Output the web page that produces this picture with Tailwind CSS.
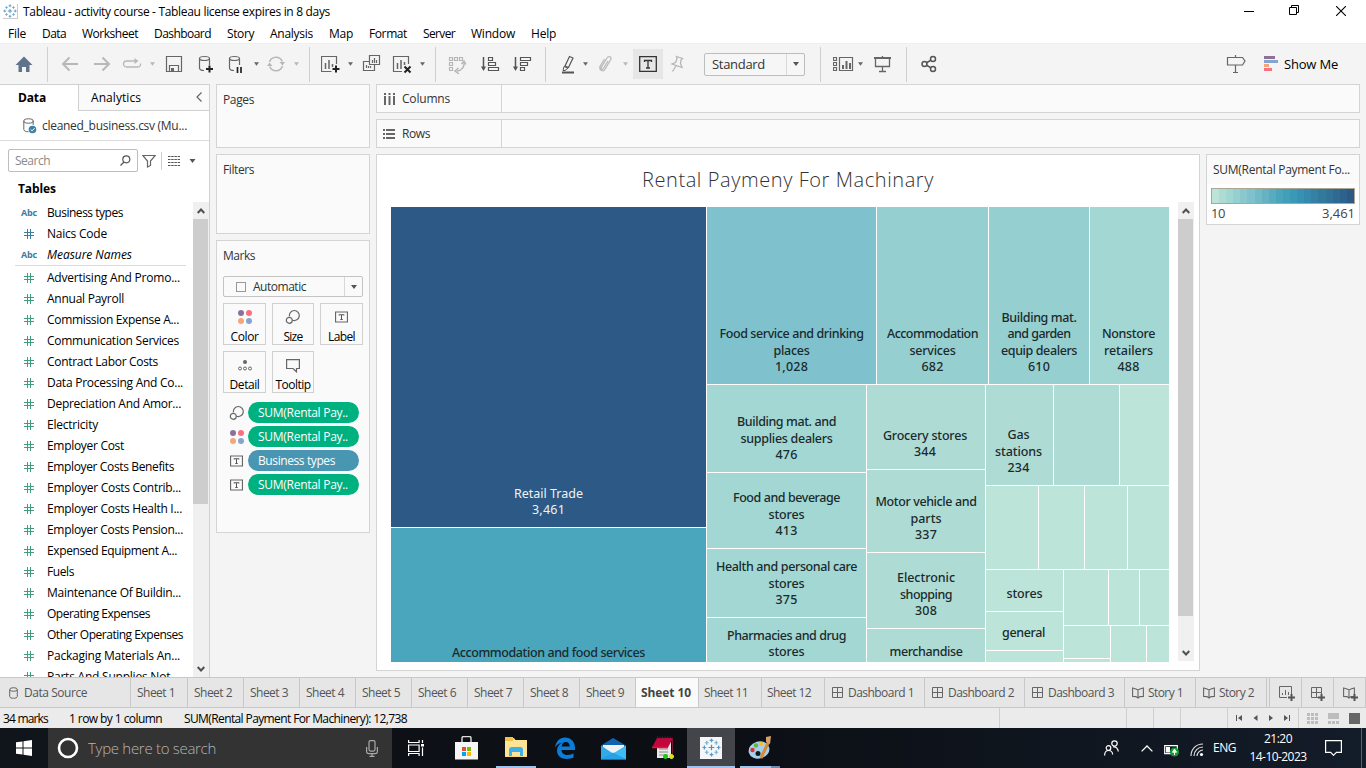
<!DOCTYPE html>
<html lang="en">
<head>
<meta charset="utf-8">
<title>Tableau - activity course</title>
<script src="https://cdn.jsdelivr.net/npm/@tailwindcss/browser@4"></script>
</head>
<body class="w-[1366px] h-[768px] overflow-hidden bg-[#f4f4f4] font-['Open_Sans','Noto_Sans',sans-serif] text-[12px] leading-4 text-black flex flex-col whitespace-nowrap">
<svg class="hidden">
  <defs>
    <symbol id="caret" viewBox="0 0 6 4"><path d="M0 0h6L3 4z" fill="currentColor"/></symbol>
    <symbol id="hash" viewBox="0 0 10 10"><path d="M3.500 0v10M6.500 0v10M0 3.500h10M0 6.500h10" stroke="currentColor" stroke-width="1" fill="none"/></symbol>
    <symbol id="up" viewBox="0 0 8 6"><path d="M.7 5L4 1.500 7.300 5" stroke="#505050" stroke-width="2" fill="none"/></symbol>
    <symbol id="down" viewBox="0 0 8 6"><path d="M.7 1L4 4.500 7.300 1" stroke="#505050" stroke-width="2" fill="none"/></symbol>
    <symbol id="size" viewBox="0 0 16 16"><path d="M4.400 7.400A5 5 0 1 1 7.600 11.200" fill="none" stroke="#666" stroke-width="1.200"/><circle cx="4.300" cy="11.300" r="3" fill="none" stroke="#666" stroke-width="1.200"/></symbol>
    <symbol id="dots" viewBox="0 0 16 16"><circle cx="4" cy="4" r="3" fill="#8b719b"/><circle cx="12" cy="4" r="3" fill="#f9717f"/><circle cx="4" cy="12" r="3" fill="#f5a679"/><circle cx="12" cy="12" r="3" fill="#83a5cf"/></symbol>
    <symbol id="tbox" viewBox="0 0 14 12"><path d="M.6.6h12.800v10.800H.6z" fill="none" stroke="#666" stroke-width="1.200"/><path d="M4.500 4.500V3.500h5v1M7 3.500v5M5.700 8.600h2.600" fill="none" stroke="#555" stroke-width="1.100"/></symbol>
    <symbol id="dash" viewBox="0 0 11 11"><path d="M.5.5h10v10h-10zM5.500.5v10M.5 5.500h10" fill="none" stroke="#666"/></symbol>
    <symbol id="story" viewBox="0 0 12 12"><path d="M.6 1l3.400 1 2 1 2-1 3.400-1v8.500L8 9.600l-2 1.400-2-1.400-3.400-.1zM6 3v8" fill="none" stroke="#666" stroke-width="1.100"/></symbol>
    <symbol id="plus" viewBox="0 0 7 7"><path d="M3.500 0v7M0 3.500h7" stroke="#555" stroke-width="2"/></symbol>
    <symbol id="tableau" viewBox="0 0 20 20"><g stroke="#4e8fb8" stroke-width="1.300"><path d="M10 7v6M7 10h6"/><path d="M10 .5v4M8 2.500h4M10 15.500v4M8 17.500h4M.5 10h4M2.500 8v4M15.500 10h4M17.500 8v4" stroke="#5b9bc4"/><path d="M5 3v4M3 5h4M15 3v4M13 5h4M5 13v4M3 15h4M15 13v4M13 15h4" stroke="#7ab0d0"/></g></symbol>
  </defs>
</svg>

<!-- Title bar -->
<header class="h-[22px] shrink-0 bg-white flex items-center pt-px">
  <span class="ml-[3px] mr-[5px] size-[15px] border-r border-b border-[#ccc] flex items-center justify-center"><svg class="size-[14px]"><use href="#tableau"/></svg></span>
  <span data-w="307">Tableau - activity course - Tableau license expires in 8 days</span>
  <svg class="ml-auto mr-[35px] w-[10px] h-[10px]" fill="none" stroke="#000"><path d="M0 4.500h10"/></svg>
  <svg class="mr-[36px] w-[11px] h-[11px] -mt-0.5" fill="none" stroke="#000" viewBox="0 0 11 11"><path d="M.5 2.500h7v7h-7zM2.500 2.500v-2h7v7h-2"/></svg>
  <svg class="mr-[20px] w-[10px] h-[10px] -mt-0.5" fill="none" stroke="#000" stroke-width="1.100"><path d="M0 0l10 10M10 0L0 10"/></svg>
</header>
<nav class="h-[21px] shrink-0 bg-white flex items-center gap-4 pl-2 pt-0.5">
  <span data-w="18">File</span><span data-w="24">Data</span><span data-w="56">Worksheet</span><span data-w="57">Dashboard</span><span data-w="27">Story</span><span data-w="43">Analysis</span><span data-w="24">Map</span><span data-w="38">Format</span><span data-w="32">Server</span><span data-w="44">Window</span><span data-w="25">Help</span>
</nav>

<!-- Toolbar -->
<div class="h-[41px] shrink-0 flex items-center border-t border-[#efefef] text-[#666]">
  <svg class="ml-[14px] size-5"><path d="M10 2.500L18.500 11h-3v7H12v-5H8v5H4.500v-7h-3z" fill="#60738a"/></svg>
  <i class="ml-[13px] w-px h-[35px] bg-[#d0d0d0]"></i>
  <svg class="ml-3 size-5" fill="none" stroke="#b8b8b8" stroke-width="2"><path d="M18 10H3M9.500 3.500L3 10l6.500 6.500"/></svg>
  <svg class="ml-3 size-5" fill="none" stroke="#b8b8b8" stroke-width="2"><path d="M2 10h15M10.500 3.500L17 10l-6.500 6.500"/></svg>
  <svg class="ml-2.5 size-5" fill="none" stroke="#b8b8b8" stroke-width="1.300"><path d="M13 7H4.500a2.800 2.800 0 0 0 0 6H16a2.600 2.600 0 0 0 2.400-3.500"/><path d="M12.500 4v6l4-3z" fill="#b8b8b8" stroke="none"/></svg>
  <svg class="ml-2 w-[5px] h-1 mr-px text-[#b8b8b8]"><use href="#caret"/></svg>
  <svg class="ml-2 size-5" fill="none" stroke="#666" stroke-width="1.200"><path d="M2.500 2.500h15v15h-15zM5.500 17.500v-6h9v6"/><path d="M7 14h3v3H7z" fill="#666" stroke="none"/></svg>
  <svg class="ml-3 size-5" fill="none" stroke="#666" stroke-width="1.200"><ellipse cx="8.500" cy="4.500" rx="5" ry="2"/><path d="M3.500 4.500V14c0 1.500 2 2.500 4.500 2.500M13.500 4.500V11"/><path d="M13.500 11.500v7M10 15h7" stroke="#222" stroke-width="2"/></svg>
  <svg class="ml-2.5 size-5" fill="none" stroke="#666" stroke-width="1.200"><ellipse cx="8.500" cy="4.500" rx="5" ry="2"/><path d="M3.500 4.500V14c0 1.500 2 2.500 4.500 2.500M13.500 4.500V11"/><path d="M11.500 13v6M15 13v6" stroke="#222" stroke-width="1.700"/></svg>
  <svg class="ml-2 w-[5px] h-1 mr-px"><use href="#caret"/></svg>
  <svg class="ml-1.5 size-5" fill="none" stroke="#b8b8b8" stroke-width="1.500"><path d="M3.500 8a6.800 6.800 0 0 1 12.800-.5M16.500 12a6.800 6.800 0 0 1-12.800.5"/><path d="M13.500 8h5.500l-2.500 3.500zM6.500 12H1l2.500-3.500z" fill="#b8b8b8" stroke="none"/></svg>
  <svg class="ml-2 w-[5px] h-1 mr-px text-[#b8b8b8]"><use href="#caret"/></svg>
  <i class="ml-[9px] w-px h-[35px] bg-[#d0d0d0]"></i>
  <svg class="ml-[11px] size-5" fill="none" stroke="#666" stroke-width="1.200"><path d="M15.500 10V2.500H.5v15h10"/><path d="M4.500 9v6M8 6v9M11.500 10v3" stroke-width="1.500"/><path d="M15 11.500v7M11.500 15h7" stroke="#222" stroke-width="2"/></svg>
  <svg class="ml-[7px] w-[5px] h-1 mr-px"><use href="#caret"/></svg>
  <svg class="ml-2 size-5" fill="none" stroke="#666" stroke-width="1.200"><path d="M7.500 1.500h10v9h-10zM7.500 7.500h-6v9h11v-6"/><path d="M10.500 6v3M12.500 4v5M14.500 6v3M4.500 11v3M6.500 12v2M8.500 12v2"/></svg>
  <svg class="ml-2.5 size-5" fill="none" stroke="#666" stroke-width="1.200"><path d="M16.500 10V2.500h-15v15H10"/><path d="M5.500 9v6M9 6v9M12.500 8v3" stroke-width="1.500"/><path d="M12.500 12.500l6 6M18.500 12.500l-6 6" stroke="#222" stroke-width="2"/></svg>
  <svg class="ml-2 w-[5px] h-1 mr-px"><use href="#caret"/></svg>
  <i class="ml-[9px] w-px h-[35px] bg-[#d0d0d0]"></i>
  <svg class="ml-[11px] size-5" fill="none" stroke="#b5b5b5" stroke-width="1.200"><path d="M2.500 3.500h3v3h-3zM7.500 3.500h3v3h-3zM12.500 3.500h3v3h-3zM2.500 8.500h3v3h-3zM2.500 13.500h3v3h-3z"/><path d="M17 8c1 5-3 9-7 9" stroke-width="1.400"/><path d="M14.500 10L17 7l2 3.500M11.500 14L8 17l4 3" stroke-width="1.400"/></svg>
  <svg class="ml-[13px] size-5" fill="none" stroke="#555" stroke-width="1.200"><path d="M3.500 3v12" stroke-width="1.500"/><path d="M1 12.500h5L3.500 17z" fill="#555" stroke="none"/><path d="M8.500 3.500h4v3h-4zM8.500 8.500h7v3h-7zM8.500 13.500h10v3h-10z"/></svg>
  <svg class="ml-3 size-5" fill="none" stroke="#555" stroke-width="1.200"><path d="M3.500 3v12" stroke-width="1.500"/><path d="M1 12.500h5L3.500 17z" fill="#555" stroke="none"/><path d="M8.500 3.500h10v3h-10zM8.500 8.500h7v3h-7zM8.500 13.500h4v3h-4z"/></svg>
  <i class="ml-[13px] w-px h-[35px] bg-[#d0d0d0]"></i>
  <svg class="ml-3 size-5" fill="none" stroke="#555" stroke-width="1.200"><path d="M11.500 2.500l3.500 1.500-4.500 9.500-3.500-1.500z"/><path d="M5 16.500l1-4 4 1.700-3 2.300z" stroke-width="1"/><path d="M4 18.500h12" stroke-width="2"/></svg>
  <svg class="ml-[5px] w-[5px] h-1 mr-px"><use href="#caret"/></svg>
  <svg class="ml-1.5 size-5" fill="none" stroke="#bbb" stroke-width="1.300"><path d="M13 7l-4.500 7.500c-1 1.500-3 .3-2.200-1.200L12 4c1.500-2.500 5-1 3.800 1.500l-6 10c-1.500 2.500-6 1-4.800-3L9.500 5"/></svg>
  <svg class="ml-2 w-[5px] h-1 mr-px text-[#b8b8b8]"><use href="#caret"/></svg>
  <span class="ml-1 size-[30px] bg-[#e6e6e6] flex items-center justify-center"><svg class="w-[18px] h-[16px]" fill="none" stroke="#333" stroke-width="1.300"><path d="M.7.7h16.600v14.600H.7zM5.500 6V4.500h7V6M9 4.500v7M7 12h4"/></svg></span>
  <svg class="ml-1 size-5" fill="none" stroke="#b5b5b5" stroke-width="1.300"><path d="M9.500 2.500l6 2-1.500 1.500-.5 3.500 1.500 4-10-3.500L8.500 8.500l1.500-3.500zM9 12l-3.500 5.500"/></svg>
  <div class="ml-[17px] w-[101px] h-[23px] border border-[#bdbdbd] rounded-[2px] bg-[#f6f6f6] flex items-center text-[#333] text-[13px]">
    <span class="ml-[7px] w-[74px]"><span data-w="53">Standard</span></span>
    <span class="w-px h-full bg-[#d8d8d8]"></span>
    <svg class="ml-[6px] w-[6px] h-1 text-[#555]"><use href="#caret"/></svg>
  </div>
  <i class="ml-[15px] w-px h-[35px] bg-[#d0d0d0]"></i>
  <svg class="ml-3 w-[21px] h-5" fill="none" stroke="#666" stroke-width="1.200"><path d="M.5 3.500h3v3h-3zM.5 8.500h3v3h-3zM.5 13.500h3v3h-3zM6.500 3.500h13v13h-13z"/><path d="M10 11v4M13.500 7v8M17 9v6" stroke-width="2"/></svg>
  <svg class="ml-1 w-[5px] h-1 mr-px"><use href="#caret"/></svg>
  <svg class="ml-2 size-5" fill="none" stroke="#666" stroke-width="1.300"><path d="M2 4h17" stroke-width="2"/><path d="M3.500 4v8.500h14V4M10.500 12.500V17M7 17.500h7M10.500 2v2"/></svg>
  <i class="ml-[14px] w-px h-[35px] bg-[#d0d0d0]"></i>
  <svg class="ml-3 size-5" fill="none" stroke="#555" stroke-width="1.500"><circle cx="5.500" cy="10" r="2.500"/><circle cx="14" cy="5" r="2.500"/><circle cx="14" cy="15" r="2.500"/><path d="M8 8.500l4-2.300M8 11.500l4 2.300"/></svg>
  <svg class="ml-auto w-5 h-5" fill="none" stroke="#666" stroke-width="1.200"><path d="M1.500 3.500h15l2.500 3.500-2.500 4h-15zM9.500 1v2.500M9.500 11v7.500M7 18.500h5"/></svg>
  <svg class="ml-[18px] w-[14px] h-5"><path d="M0 2h11v3H0z" fill="#8b719b"/><path d="M0 6h14v3H0z" fill="#83a5cf"/><path d="M0 10h5v3H0z" fill="#f5a679"/><path d="M0 14h8v3H0z" fill="#f9717f"/></svg>
  <span class="ml-[6px] mr-[28px] w-[54px] text-[13px] text-black"><span data-w="54">Show Me</span></span>
</div>

<!-- Workspace -->
<main class="h-[593px] shrink-0 flex gap-[7px]">
  <!-- Data pane -->
  <aside class="w-[210px] h-full bg-white border-r border-t border-[#d0d0d0] flex flex-col overflow-hidden">
    <div class="h-[26px] shrink-0 flex">
      <span class="w-[78px] pl-[18px] pt-[5px] font-bold"><span data-w="28">Data</span></span>
      <div class="flex-1 border-l border-b border-[#d0d0d0] bg-[#fafafa] flex pl-3 pt-[5px] pr-[7px]">
        <span data-w="50">Analytics</span>
        <svg class="ml-auto mt-[2px] w-[6px] h-[10px]" fill="none" stroke="#666" stroke-width="1.200"><path d="M5.500.5L1 5l4.500 4.500"/></svg>
      </div>
    </div>
    <div class="h-[30px] shrink-0 border-b border-[#dcdcdc] flex items-center pl-[23px] text-[#333]">
      <svg class="w-[14px] h-4 mr-[5px]" fill="none" stroke="#666"><ellipse cx="5.500" cy="3" rx="4.700" ry="2.200"/><path d="M.8 3v8.500c0 1.300 2 2.300 4.700 2.300M10.200 3v4"/><circle cx="9.500" cy="11.500" r="3.800" fill="#3a83a5" stroke="none"/><path d="M7.700 11.500l1.400 1.400 2.500-2.700" stroke="#fff"/></svg>
      <span data-w="145">cleaned_business.csv (Mu...</span>
    </div>
    <div class="mt-2 h-[23px] shrink-0 flex items-center">
      <div class="ml-2 w-[130px] h-[23px] border border-[#bdbdbd] rounded-[2px] flex items-center justify-between px-1.5 text-[#8a8a8a]">
        <span data-w="35">Search</span>
        <svg class="size-[11px]" fill="none" stroke="#555" stroke-width="1.200"><circle cx="6.300" cy="4.300" r="3.500"/><path d="M4 7L.5 10.500"/></svg>
      </div>
      <svg class="ml-1 w-[14px] h-[14px]" fill="none" stroke="#666" stroke-width="1.200"><path d="M.8 1.500h12.400L8.500 7v4.500L5.500 13V7z"/></svg>
      <i class="ml-[5px] w-px h-[18px] bg-[#d0d0d0]"></i>
      <svg class="ml-1.5 w-[12px] h-[10px]" stroke="#555" stroke-dasharray="2.500 .700"><path d="M0 .5h12M0 3.500h12M0 6.500h12M0 9.500h12"/></svg>
      <svg class="ml-[9px] w-[7px] h-1 text-[#555]"><use href="#caret"/></svg>
    </div>
    <div class="h-[30px] shrink-0 pl-[18px] pt-[9px] font-bold"><span data-w="38">Tables</span></div>
    <div class="flex-1 min-h-0 flex">
      <div id="fields" class="w-[193px] overflow-hidden"></div>
      <div class="w-4 bg-[#f0f0f0] flex flex-col justify-between">
        <div class="h-[17px] flex items-center justify-center"><svg class="w-2 h-[6px]"><use href="#up"/></svg></div>
        <div class="w-[15px] h-[285px] bg-[#cdcdcd]"></div>
        <div class="flex-1"></div>
        <div class="h-[17px] flex items-center justify-center"><svg class="w-2 h-[6px]"><use href="#down"/></svg></div>
      </div>
    </div>
  </aside>

  <!-- Cards -->
  <section class="w-[154px] -ml-px flex flex-col gap-[6px] text-[#333]">
    <div class="h-[64px] shrink-0 border border-[#d4d4d4] bg-[#fafafa] pl-1.5 pt-[7px]"><span data-w="31">Pages</span></div>
    <div class="h-[80px] shrink-0 border border-[#d4d4d4] bg-[#fafafa] pl-1.5 pt-[7px]"><span data-w="31">Filters</span></div>
    <div class="h-[293px] shrink-0 border border-[#d4d4d4] bg-[#fafafa] px-1.5 pt-[7px] flex flex-col">
      <div class="h-4"><span data-w="32">Marks</span></div>
      <div class="mt-3 w-[140px] h-[21px] shrink-0 border border-[#c4c4c4] rounded-[2px] flex items-center">
        <i class="ml-3 size-[10px] border border-[#999]"></i>
        <span class="ml-[7px] w-[91px]"><span data-w="53">Automatic</span></span>
        <span class="w-px h-full bg-[#d8d8d8]"></span>
        <svg class="ml-1.5 w-[6px] h-1 text-[#555]"><use href="#caret"/></svg>
      </div>
      <div class="mt-[6px] grid grid-cols-[43px_42px_43px] gap-x-[6px] gap-y-[6px] auto-rows-[42px] text-black text-center leading-[14px]">
        <div class="border border-[#d0d0d0] flex flex-col items-center justify-between pt-[5px]"><svg class="size-4 shrink-0"><use href="#dots"/></svg><span data-w="28">Color</span></div>
        <div class="border border-[#d0d0d0] flex flex-col items-center justify-between pt-[5px]"><svg class="size-4 shrink-0"><use href="#size"/></svg><span data-w="19">Size</span></div>
        <div class="border border-[#d0d0d0] flex flex-col items-center justify-between pt-[7px]"><svg class="w-[13px] h-3 shrink-0"><use href="#tbox"/></svg><span data-w="27">Label</span></div>
        <div class="border border-[#d0d0d0] flex flex-col items-center justify-between pt-[7px]"><svg class="w-[14px] h-[14px] shrink-0" fill="none" stroke="#666"><circle cx="7" cy="3" r="2" fill="#666" stroke="none"/><circle cx="2" cy="9.500" r="1.500"/><circle cx="7" cy="9.500" r="1.500"/><circle cx="12" cy="9.500" r="1.500"/></svg><span data-w="30">Detail</span></div>
        <div class="border border-[#d0d0d0] flex flex-col items-center justify-between pt-[7px]"><svg class="w-[14px] h-[14px] shrink-0" fill="none" stroke="#666" stroke-width="1.200"><path d="M.6.6h12.800v8.900H10.500v3.300L7 9.500H.6z"/></svg><span data-w="35">Tooltip</span></div>
      </div>
      <div class="mt-[9px] flex flex-col gap-[3px] pl-1.5 text-white">
        <div class="flex items-center gap-[3px]"><svg class="size-4"><use href="#size"/></svg><span class="w-[111px] h-[21px] rounded-full bg-[#00b180] pl-2.5 pt-[2.500px]"><span data-w="90">SUM(Rental Pay..</span></span></div>
        <div class="flex items-center gap-[3px]"><svg class="size-4"><use href="#dots"/></svg><span class="w-[111px] h-[21px] rounded-full bg-[#00b180] pl-2.5 pt-[2.500px]"><span data-w="90">SUM(Rental Pay..</span></span></div>
        <div class="flex items-center gap-[5px] pl-px"><svg class="w-[13px] h-3"><use href="#tbox"/></svg><span class="w-[111px] h-[21px] rounded-full bg-[#4996b2] pl-2.5 pt-[2.500px]"><span data-w="77">Business types</span></span></div>
        <div class="flex items-center gap-[5px] pl-px"><svg class="w-[13px] h-3"><use href="#tbox"/></svg><span class="w-[111px] h-[21px] rounded-full bg-[#00b180] pl-2.5 pt-[2.500px]"><span data-w="90">SUM(Rental Pay..</span></span></div>
      </div>
    </div>
  </section>

  <!-- Shelves and view -->
  <section class="w-[984px] -ml-px flex flex-col text-[#333]">
    <div class="h-[29px] shrink-0 border border-[#d4d4d4] bg-[#fafafa] flex items-center">
      <div class="w-[125px] h-full border-r border-[#d4d4d4] flex items-center pl-[7px]">
        <svg class="w-3 h-3 mr-1.5" stroke="#666" stroke-width="2"><path d="M1 3v9M5.500 3v9M10 3v9"/><path d="M1 0v2M5.500 0v2M10 0v2"/></svg><span data-w="48">Columns</span>
      </div>
    </div>
    <div class="mt-1.5 h-[29px] shrink-0 border border-[#d4d4d4] bg-[#fafafa] flex items-center">
      <div class="w-[125px] h-full border-r border-[#d4d4d4] flex items-center pl-[6px]">
        <svg class="w-3 h-3 mr-[7px]" stroke="#666" stroke-width="2"><path d="M3 2h9M3 6h9M3 10h9"/><path d="M0 2h2M0 6h2M0 10h2"/></svg><span data-w="28">Rows</span>
      </div>
    </div>
    <div class="mt-1.5 flex gap-1.5">
      <div class="w-[824px] h-[517px] border border-[#d4d4d4] bg-white flex flex-col">
        <h1 class="h-[48px] shrink-0 pt-[13px] text-center text-[20px] leading-6 font-light text-[#333]"><span data-w="292">Rental Paymeny For Machinary</span></h1>
        <div class="flex pl-[14px]">
          <!-- Treemap -->
          <div class="mt-1 w-[778px] h-[455px] shrink-0 overflow-hidden grid grid-cols-[315px_462px] gap-px text-center font-['Noto_Sans','Open_Sans',sans-serif] font-medium text-[12.500px] leading-[16.250px] text-[#1b2a2c] whitespace-pre">
            <div class="grid grid-rows-[320px_134px] gap-px">
              <div class="bg-[#2c5985] text-[#eef2f5] font-normal flex flex-col justify-end items-center pb-[9px]"><span data-w="69">Retail Trade</span><span data-w="33">3,461</span></div>
              <div class="bg-[#4aa6bd] flex flex-col justify-end items-center pb-px"><span data-w="193">Accommodation and food services</span></div>
            </div>
            <div class="grid grid-rows-[177px_277px] gap-px">
              <div class="grid grid-cols-[169px_111px_100px_79px] gap-px">
                <div class="bg-[#7fc1cc] flex flex-col justify-end items-center pb-[9px]"><span data-w="144">Food service and drinking</span><span data-w="36">places</span><span data-w="33">1,028</span></div>
                <div class="bg-[#96cfd0] flex flex-col justify-end items-center pb-[9px]"><span data-w="91">Accommodation</span><span data-w="46">services</span><span data-w="22">682</span></div>
                <div class="bg-[#96cfd0] flex flex-col justify-end items-center pb-[9px]"><span data-w="75">Building mat.</span><span data-w="63">and garden</span><span data-w="76">equip dealers</span><span data-w="22">610</span></div>
                <div class="bg-[#a2d7d3] flex flex-col justify-end items-center pb-[9px] pr-[2px]"><span data-w="53">Nonstore</span><span data-w="49">retailers</span><span data-w="22">488</span></div>
              </div>
              <div class="grid grid-cols-[159px_118px_183px] gap-px">
                <div class="grid grid-rows-[87px_75px_68px_44px] gap-px">
                  <div class="bg-[#a2d7d3] flex flex-col justify-end items-center pb-[9px]"><span data-w="99">Building mat. and</span><span data-w="92">supplies dealers</span><span data-w="22">476</span></div>
                  <div class="bg-[#a2d7d3] flex flex-col justify-end items-center pb-[9px]"><span data-w="107">Food and beverage</span><span data-w="36">stores</span><span data-w="22">413</span></div>
                  <div class="bg-[#a2d7d3] flex flex-col justify-end items-center pb-[9px]"><span data-w="141">Health and personal care</span><span data-w="36">stores</span><span data-w="22">375</span></div>
                  <div class="bg-[#a2d7d3] flex flex-col justify-end items-center pb-[2px]"><span data-w="119">Pharmacies and drug</span><span data-w="36">stores</span></div>
                </div>
                <div class="grid grid-rows-[84px_82px_75px_33px] gap-px">
                  <div class="bg-[#aedcd5] flex flex-col justify-end items-center pb-[9px] pr-[2px]"><span data-w="84">Grocery stores</span><span data-w="22">344</span></div>
                  <div class="bg-[#aedcd5] flex flex-col justify-end items-center pb-[9px]"><span data-w="101">Motor vehicle and</span><span data-w="31">parts</span><span data-w="22">337</span></div>
                  <div class="bg-[#aedcd5] flex flex-col justify-end items-center pb-[9px]"><span data-w="58">Electronic</span><span data-w="52">shopping</span><span data-w="22">308</span></div>
                  <div class="bg-[#aedcd5] flex flex-col justify-end items-center pb-[2px]"><span data-w="73">merchandise</span></div>
                </div>
                <div class="grid grid-rows-[100px_83px_92px] gap-px">
                  <div class="grid grid-cols-[67px_65px_49px] gap-px">
                    <div class="bg-[#aedcd5] flex flex-col justify-end items-center pb-[9px] pr-[2px]"><span data-w="22">Gas</span><span data-w="47">stations</span><span data-w="22">234</span></div>
                    <div class="bg-[#aedcd5]"></div>
                    <div class="bg-[#bce4d8]"></div>
                  </div>
                  <div class="grid grid-cols-[52px_45px_42px_41px] gap-px"><div class="bg-[#bce4d8]"></div><div class="bg-[#bce4d8]"></div><div class="bg-[#bce4d8]"></div><div class="bg-[#bce4d8]"></div></div>
                  <div class="grid grid-cols-[77px_105px] gap-px">
                    <div class="grid grid-rows-[41px_38px_11px] gap-px">
                      <div class="bg-[#bce4d8] flex flex-col justify-end items-center pb-[9px]"><span data-w="36">stores</span></div>
                      <div class="bg-[#bce4d8] flex flex-col justify-end items-center pb-[9px] pr-[2px]"><span data-w="43">general</span></div>
                      <div class="bg-[#bce4d8]"></div>
                    </div>
                    <div class="grid grid-rows-[55px_36px] gap-px">
                      <div class="grid grid-cols-[44px_30px_29px] gap-px"><div class="bg-[#bce4d8]"></div><div class="bg-[#bce4d8]"></div><div class="bg-[#bce4d8]"></div></div>
                      <div class="grid grid-cols-[46px_35px_22px] gap-px">
                        <div class="grid grid-rows-[32px_3px] gap-px"><div class="bg-[#bce4d8]"></div><div class="bg-[#bce4d8]"></div></div>
                        <div class="bg-[#bce4d8]"></div><div class="bg-[#bce4d8]"></div>
                      </div>
                    </div>
                  </div>
                </div>
              </div>
            </div>
          </div>
          <div class="ml-[9px] -mt-px w-4 h-[459px] bg-[#f0f0f0] flex flex-col">
            <div class="h-[17px] flex items-center justify-center"><svg class="w-2 h-[6px]"><use href="#up"/></svg></div>
            <div class="w-[15px] h-[397px] bg-[#cdcdcd]"></div>
            <div class="flex-1"></div>
            <div class="h-[17px] flex items-center justify-center"><svg class="w-2 h-[6px]"><use href="#down"/></svg></div>
          </div>
        </div>
      </div>
      <!-- Colour legend -->
      <div class="w-[154px] h-[71px] border border-[#d4d4d4] bg-white flex flex-col">
        <div class="h-[29px] bg-[#fafafa] pl-1.5 pt-[7px]"><span data-w="137">SUM(Rental Payment Fo...</span></div>
        <div id="ramp" class="mt-1 mx-1 h-4 border border-[#a9a794] flex"></div>
        <div class="mx-1 flex justify-between text-[13px] leading-[18px] text-[#444]"><span data-w="14">10</span><span data-w="33">3,461</span></div>
      </div>
    </div>
  </section>
</main>

<!-- Sheet tabs -->
<div id="tabs" class="h-[31px] shrink-0 border-y border-[#c8c8c8] bg-[#e6e6e6] flex text-[#555]"></div>

<!-- Status bar -->
<div class="h-5 shrink-0 bg-[#ebebeb] flex pl-[3px]">
  <span class="w-[66px] pt-[3px]"><span data-w="45">34 marks</span></span>
  <span class="w-[115px] pt-[3px]"><span data-w="93">1 row by 1 column</span></span>
  <span class="pt-[3px]"><span data-w="223">SUM(Rental Payment For Machinery): 12,738</span></span>
  <i class="ml-auto w-[127px] border-l border-[#cfcfcf]"></i><i class="w-[27px] border-l border-[#cfcfcf]"></i><i class="w-[27px] border-l border-[#cfcfcf]"></i><i class="w-[47px] border-l border-[#cfcfcf]"></i>
  <div class="w-[71px] border-l border-[#cfcfcf] flex items-center pl-2">
    <svg class="w-[56px] h-2" fill="#555"><path d="M0 1h1v6H0zM6 1v6L2 4zM21.500 1v6l-4-3zM33 1v6l4-3zM48 1v6l4-3zM53 1h1v6h-1z"/></svg>
  </div>
  <div class="w-[68px] border-l border-[#cfcfcf] flex items-center pl-2">
    <svg class="w-[54px] h-[11px]"><path d="M0 0h3v3H0zM4 0h3v3H4zM8 0h3v3H8zM0 4h3v3H0zM4 4h3v3H4zM8 4h3v3H8zM0 8h3v3H0zM4 8h3v3H4zM8 8h3v3H8zM21 0h11v6H21zM21 8h3v3h-3zM25 8h3v3h-3zM29 8h3v3h-3z" fill="#bdbdbd"/><path d="M42 0h11v11H42z" fill="#666"/></svg>
  </div>
</div>

<!-- Taskbar -->
<footer class="h-10 shrink-0 bg-[#0e131b] bg-linear-to-r from-[#10151c] via-[#0b0e13] to-[#131c29] flex items-center text-white">
  <svg class="ml-4 size-4" fill="#fff"><path d="M0 2.300L6.500 1.400v6.100H0zM7.500 1.200L16 0v7.500H7.500zM0 8.500h6.500v6.100L0 13.700zM7.500 8.500H16V16l-8.500-1.200z"/></svg>
  <div class="ml-4 w-[344px] h-10 bg-[#333] flex items-center">
    <svg class="ml-[9px] size-[22px]"><circle cx="11" cy="11" r="9" fill="none" stroke="#fff" stroke-width="2.600"/></svg>
    <span class="ml-[9px] text-[15px] leading-5 font-light text-[#b5b5b5]"><span data-w="128">Type here to search</span></span>
    <svg class="ml-auto mr-[14px] w-3 h-[17px]" fill="none" stroke="#aaa" stroke-width="1.200"><rect x="3" y=".6" width="6" height="10.500" rx="1.500"/><path d="M.6 7v4.500c0 1.500 1 2.200 2.500 2.200h5.800c1.500 0 2.500-.7 2.500-2.200V7M6 13.700v2.700M3.500 16.400h5"/></svg>
  </div>
  <svg class="ml-4 w-[17px] h-4" fill="none" stroke="#fff" stroke-width="1.200"><path d="M.6 0v2.500h10.500V0M.6 5h10.500v6.500H.6zM.6 16v-2.500h10.500V16M14.500 0v3M14.500 7.500V16"/><path d="M13 4h3v2.500h-3z" fill="#fff" stroke="none"/></svg>
  <svg class="ml-[30px] w-6 h-6"><path d="M7 7V2c0-1 .5-1.500 1.500-1.500h6c1 0 1.500.5 1.500 1.500v5" fill="none" stroke="#ddd" stroke-width="1.400"/><path d="M0 6h23v17.500H0z" fill="#f5f5f5"/><path d="M7 11h4v4H7z" fill="#e8502a"/><path d="M12 11h4v4h-4z" fill="#7fba00"/><path d="M7 16h4v4H7z" fill="#00a4ef"/><path d="M12 16h4v4h-4z" fill="#ffb900"/></svg>
  <div class="ml-[17px] w-10 h-10 border-b-2 border-[#9fc3ea] flex items-center justify-center"><svg class="w-6 h-6"><path d="M1 3h9l1.500 2H23v17H1z" fill="#f9d978"/><path d="M1 5h22v16H1z" fill="#fde595"/><path d="M1 2h8v4H1z" fill="#f3c244"/><path d="M5 21v-6c0-2 1-3 3-3h8c2 0 3 1 3 3v6h-3v-4H8v4z" fill="#3fb1e8"/></svg></div>
  <svg class="ml-[18px] w-[22px] h-[22px]" viewBox="0 0 22 22"><path d="M1 10.500C2 4 6 .5 11 .5c6 0 10 4.500 10 10.500v2H7.500c0 3.500 2.800 5 6 5 2.500 0 4.500-.7 6-1.700v4.300c-2 1-4 1.400-6.700 1.400C7 22 3 18.500 3 13.500c0-3.500 2-6.300 5-7.800C5 6 2.500 8 1 10.500zM7.600 9.500h8.200c0-2.500-1.300-4.500-4-4.500-2.300 0-3.900 2-4.200 4.500z" fill="#0a7ddb"/></svg>
  <svg class="ml-[25px] w-[25px] h-[23px]"><path d="M0 8.500L12 1l13 7.500V22.500H0z" fill="#0f64b0"/><path d="M2 8h21v9H2z" fill="#f2f2f2"/><path d="M0 8.500l12 8L0 22.500z" fill="#33a9e8"/><path d="M25 8.500l-13 8 13 6z" fill="#3cbbf5"/><path d="M0 22.500l12-7 13 7z" fill="#23a2ea"/></svg>
  <svg class="ml-[26px] w-[24px] h-6"><path d="M5 8l14-3v17H5z" fill="#e9e9e9"/><path d="M7 13h9M7 16h9M7 19h9" stroke="#888"/><path d="M5 2h16l-5 9.500H0z" fill="#c4043f"/><path d="M5 1.500h15" stroke="#333" stroke-width="2" stroke-dasharray="1 1.500"/><path d="M0 11.500h16" stroke="#e8122a" stroke-width="1.500"/><path d="M20.500 3v15" stroke="#7a1530"/><path d="M11 20.500h5M13.500 18v5" stroke="#18c818" stroke-width="2.500"/><path d="M17 20.500h5M19.500 18v5" stroke="#d6e61a" stroke-width="2.500"/></svg>
  <div class="ml-[11px] w-12 h-10 bg-[#43454a] border-b-2 border-[#9fc3ea] flex items-center justify-center"><span class="size-[22px] mt-[1px] bg-[#f4f6f8] flex items-center justify-center"><svg class="size-[19px]"><use href="#tableau"/></svg></span></div>
  <div class="ml-[5px] w-10 h-10 flex flex-col items-center justify-between"><svg class="mt-2 w-6 h-6"><ellipse cx="11" cy="14" rx="10.500" ry="8.500" transform="rotate(-15 11 14)" fill="#a7d0ea"/><circle cx="10" cy="17.500" r="2.500" fill="#13171e"/><circle cx="4.500" cy="14" r="2.200" fill="#d33"/><circle cx="8" cy="9.500" r="2.200" fill="#5eb64a"/><circle cx="13" cy="8" r="2.200" fill="#f0c030"/><path d="M21 5l-8 17" stroke="#d58a35" stroke-width="3"/><path d="M18 1l5-1-1 8-4-2z" fill="#d9a066"/></svg><div class="w-full h-[2px] flex"><i class="w-[31px] bg-[#9fc3ea]"></i><i class="flex-1 bg-[#6f8cb0]"></i></div></div>
  <svg class="ml-auto w-[15px] h-4" fill="none" stroke="#fff" stroke-width="1.200"><circle cx="10.500" cy="3.500" r="2.700"/><circle cx="4.500" cy="8" r="2.300"/><path d="M.6 15.500c0-3 1.500-5 4-5s4 2 4 4M9 7c3-.8 5 1.500 5.300 4.500"/></svg>
  <svg class="ml-[22px] w-3 h-[7px]" fill="none" stroke="#fff" stroke-width="1.300"><path d="M.6 6.400L6 1l5.400 5.400"/></svg>
  <svg class="ml-[11px] w-[16px] h-[14px] mt-[3px]"><path d="M.7 2.700h12.600v8H.7z" fill="none" stroke="#fff" stroke-width="1.200"/><path d="M2 4h4v5.500H2z" fill="#fff"/><circle cx="10.500" cy="9" r="4.500" fill="#159a2e"/><path d="M10.500 6l2 3.200h-4zM10.500 9v3" fill="#fff" stroke="#fff"/></svg>
  <svg class="ml-[10px] w-[14px] h-[14px] mt-[3px]" fill="none" stroke="#ddd" stroke-width="1.200"><path d="M1 13C1 6 6 1 13 1M4 13c0-5 4-9 9-9M7 13c0-3 3-6 6-6"/><circle cx="11.500" cy="11.500" r="1.600" fill="#fff" stroke="none"/></svg>
  <span class="ml-[9px] w-[23px]"><span data-w="23">ENG</span></span>
  <div class="ml-[12px] w-[60px] flex flex-col items-center leading-[18px]"><span data-w="28">21:20</span><span data-w="57">14-10-2023</span></div>
  <svg class="ml-[17px] w-[17px] h-4" fill="none" stroke="#fff" stroke-width="1.200"><path d="M.6.6h15.800v11.800h-5L8.500 15.300l-2.800-2.900H.6z"/></svg>
  <i class="ml-[19px] mr-1 w-px h-10 bg-[#5a6069]"></i>
</footer>

<script>
const fields = [
  ['b','Business types',76],['n','Naics Code',60],['m','Measure Names',85],
  ['g','Advertising And Promo...',133],['g','Annual Payroll',77],['g','Commission Expense A...',132],
  ['g','Communication Services',132],['g','Contract Labor Costs',111],['g','Data Processing And Co...',136],
  ['g','Depreciation And Amor...',134],['g','Electricity',51],['g','Employer Cost',77],
  ['g','Employer Costs Benefits',127],['g','Employer Costs Contrib...',134],['g','Employer Costs Health I...',135],
  ['g','Employer Costs Pension...',136],['g','Expensed Equipment A...',130],['g','Fuels',27],
  ['g','Maintenance Of Buildin...',134],['g','Operating Expenses',103],['g','Other Operating Expenses',136],
  ['g','Packaging Materials An...',133],['g','Parts And Supplies Not...',132]
];
const abc = '<span class="text-[9px] font-bold text-[#3a7d9c] font-[\'Liberation_Sans\',sans-serif]" data-w="16">Abc</span>';
document.getElementById('fields').innerHTML = fields.map(([k, t, w]) => {
  const icon = k === 'g' ? '<svg class="size-[10px] text-[#3f9f7c]"><use href="#hash"/></svg>'
    : k === 'n' ? '<svg class="size-[10px] text-[#3a7d9c]"><use href="#hash"/></svg>' : abc;
  return `<div class="h-[21px] flex items-center"><span class="w-[47px] pl-[11px] flex justify-center items-center">${icon}</span><span class="${k === 'm' ? 'italic' : ''}"><span data-w="${w}">${t}</span></span></div>`
    + (k === 'm' ? '<div class="ml-[15px] mr-[7px] h-[2px] border-t border-[#dcdcdc]"></div>' : '');
}).join('');

const ramp = ['#bce4d8','#aedcd5','#a2d6d2','#96cfd0','#8ac8cd','#7fc1cc','#73bac7','#66b2c3','#59acbf','#4aa5bc','#429fb9','#3c98b7','#3691b4','#3589ad','#3481a5','#32799e','#317297','#2f6a92','#2d628c','#2c5985'];
document.getElementById('ramp').innerHTML = ramp.map(c => `<i class="flex-1" style="background:${c}"></i>`).join('');

const bar = '<svg class="w-[13px] h-[13px]" fill="none" stroke="#666"><path d="M12.500 8V.5H.5v11H8M3.500 7v2M6.500 4v5M9.500 6v3"/></svg>';
const dash = '<svg class="w-[11px] h-[11px]"><use href="#dash"/></svg>';
const story = '<svg class="w-3 h-3"><use href="#story"/></svg>';
const src = '<svg class="w-[9px] h-3" fill="none" stroke="#666"><ellipse cx="4.500" cy="2.500" rx="3.800" ry="1.800"/><path d="M.7 2.500v7c0 2.400 7.600 2.400 7.600 0v-7"/></svg>';
const tabs = [[131,9,src,'Data Source',63,6],[57,6,'','Sheet 1',38]];
for (let i = 2; i < 10; i++) tabs.push([56,6,'','Sheet ' + i,38]);
tabs.push([63,5,'','Sheet 10',50,0,1],[63,5,'','Sheet 11',44],[63,5,'','Sheet 12',44]);
for (let i = 1; i < 4; i++) tabs.push([100,7,dash,'Dashboard ' + i,66,5]);
tabs.push([71,7,story,'Story 1',35,4],[71,7,story,'Story 2',35,4]);
let html = tabs.map(([w, p, ic, t, tw, g, on]) => `<div class="h-full shrink-0 flex items-center border-r border-[#c8c8c8] ${on ? 'bg-[#fafafa] font-bold text-[#444]' : ''}" style="width:${w}px;padding-left:${p}px;gap:${g || 0}px">${ic}<span data-w="${tw}">${t}</span></div>`).join('');
html += '<div class="w-[3px] shrink-0 border-r border-[#c8c8c8]"></div>';
html += [bar, dash, story].map(ic => `<div class="w-8 shrink-0 border-r border-[#c8c8c8] flex items-center pl-[9px]">${ic}<svg class="-ml-1 mt-2.5 size-[7px]"><use href="#plus"/></svg></div>`).join('');
document.getElementById('tabs').innerHTML = html;

function fit() {
  document.querySelectorAll('[data-w]').forEach(el => {
    el.style.display = 'inline-block';
    el.style.letterSpacing = '0px';
    const w = +el.dataset.w, n = el.textContent.length;
    el.style.letterSpacing = ((w - el.getBoundingClientRect().width) / n).toFixed(3) + 'px';
  });
}
window.addEventListener('load', () => { fit(); document.fonts.ready.then(fit); setTimeout(fit, 60); });
</script>
</body>
</html>
